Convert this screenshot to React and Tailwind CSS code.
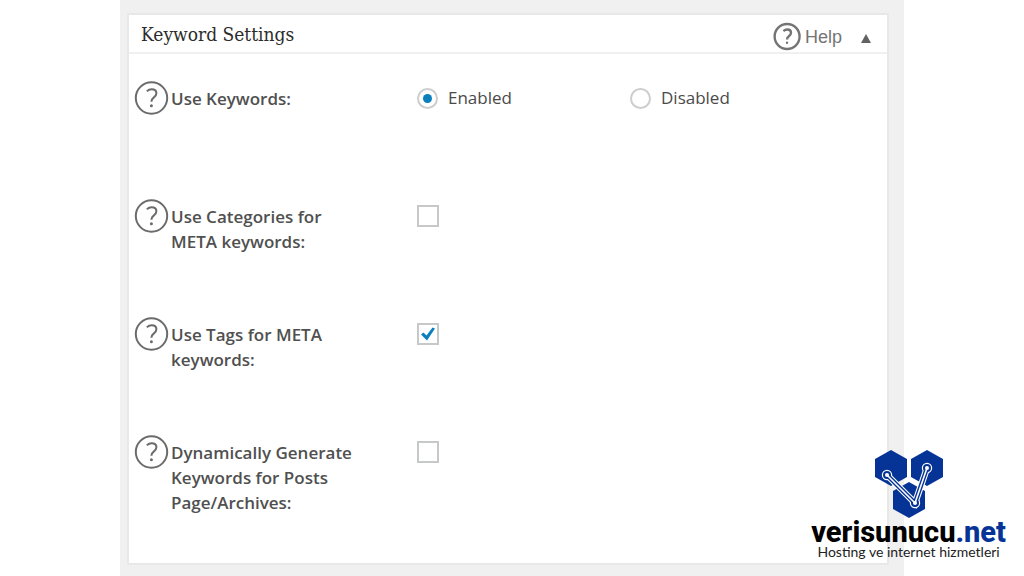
import { useState } from 'react';

const checks = [
  { id: 'categories', label: 'Use Categories for META keywords:' },
  { id: 'tags', label: 'Use Tags for META keywords:' },
  { id: 'dynamic', label: 'Dynamically Generate Keywords for Posts Page/Archives:' },
];

function HelpIcon({ className, stroke = 2 }) {
  return (
    <svg viewBox="0 0 34 34" className={className} fill="none" stroke="currentColor" aria-hidden="true">
      <circle cx="16.5" cy="17" r="15.7" strokeWidth={stroke} />
      <path
        d="M11.8 10.2C13.3 8.9 14.9 8.2 16.6 8.2c3 0 4.8 1.5 4.8 4 0 2.1-1 3.1-2.7 4.4-1.7 1.3-2.3 2.1-2.3 4.2"
        strokeWidth={stroke}
      />
      <circle cx="16.4" cy="24.8" r="1.5" fill="currentColor" stroke="none" />
    </svg>
  );
}

function Row({ label, htmlFor, children }) {
  return (
    <div className="flex h-[118px] items-start">
      <button type="button" aria-label="Help" className="shrink-0 text-[#6b6b6b]">
        <HelpIcon className="h-[34px] w-[34px] overflow-visible" />
      </button>
      <label htmlFor={htmlFor} className="ml-0.5 w-[184px] shrink-0 pt-[5px] text-[17px] leading-[25px] font-semibold text-[#505050]">
        {label}
      </label>
      <div className="ml-[62px] flex h-[34px] flex-1 items-center">{children}</div>
    </div>
  );
}

function Radio({ label, checked, onChange }) {
  return (
    <label className="flex w-[213px] items-center gap-2.5 text-[17px] leading-6 font-medium text-[#4a4a4a]">
      <span className="grid place-items-center">
        <input
          type="radio"
          name="use-keywords"
          checked={checked}
          onChange={onChange}
          className="col-start-1 row-start-1 h-[21px] w-[21px] appearance-none rounded-full border-2 border-[#cbcdce] bg-white"
        />
        {checked && <span className="pointer-events-none z-10 col-start-1 row-start-1 h-[9px] w-[9px] rounded-full bg-[#0a7fbd]" />}
      </span>
      {label}
    </label>
  );
}

function Logo() {
  return (
    <a href="#" className="absolute right-[18px] bottom-[18px] flex flex-col items-center">
      <svg viewBox="0 0 70 70" className="h-[70px] w-[70px]" aria-hidden="true">
        <g fill="#063496">
          <path d="M17 1 33 10v18L17 37 1 28V10z" />
          <path d="M53 1l16 9v18l-16 9-16-9V10z" />
          <path d="M35 33l16 9v18l-16 9-16-9V42z" />
        </g>
        <path d="M13 26 41 54 53 19" fill="none" stroke="#fff" strokeWidth="6.6" />
        <g fill="#063496" stroke="#fff" strokeWidth="1.2">
          <circle cx="13" cy="26" r="4.6" />
          <circle cx="53" cy="19" r="4.6" />
          <circle cx="41" cy="54" r="4.6" />
        </g>
        <path d="M13 26 41 54 53 19" fill="none" stroke="#063496" strokeWidth="4.4" />
        <path d="M13 26 41 54 53 19" fill="none" stroke="#fff" strokeWidth="1.6" />
        <g fill="#fff">
          <circle cx="13" cy="26" r="2" />
          <circle cx="53" cy="19" r="2" />
          <circle cx="41" cy="54" r="2" />
        </g>
      </svg>
      <span className="font-[Roboto,sans-serif] text-[29px] leading-[26px] font-extrabold text-black">
        verisunucu<span className="text-[#063496]">.net</span>
      </span>
      <span className="font-[Lato,sans-serif] text-[14px] leading-[14px] text-[#222]">
        Hosting ve internet hizmetleri
      </span>
    </a>
  );
}

export default function App() {
  const [enabled, setEnabled] = useState(true);
  const [open, setOpen] = useState(true);
  const [values, setValues] = useState({ categories: false, tags: true, dynamic: false });

  return (
    <div className="relative min-h-screen bg-white font-['Open_Sans',sans-serif]">
      <main className="mx-auto min-h-screen w-full max-w-[784px] bg-[#f0f0f0] pt-[13px] pr-[15px] pb-3 pl-[7px]">
        <section className="border-2 border-[#e8e8e8] bg-white">
          <header className="flex h-[39px] items-center justify-between border-b-2 border-[#f0f0f0] pr-[15px] pl-3">
            <h2 className="font-['DejaVu_Serif_Condensed','DejaVu_Serif',serif] text-[19px] leading-6 text-[#2c2c2c]">Keyword Settings</h2>
            <div className="flex items-center pt-1.5 text-[#747474]">
              <button type="button" className="flex items-center gap-1 font-['Liberation_Sans',sans-serif] text-[18px] leading-6">
                <HelpIcon className="h-[27px] w-[27px] overflow-visible" stroke={3} />
                Help
              </button>
              <button type="button" aria-label="Toggle panel" onClick={() => setOpen(!open)} className="ml-[18px] pt-1">
                <svg viewBox="0 0 12 9" className="h-[9px] w-3" fill="#626262">
                  <path d="M6 0 11 9H1z" />
                </svg>
              </button>
            </div>
          </header>

          {open && (
            <div className="pt-[27px] pb-[10px] pl-1.5">
              <Row label="Use Keywords:">
                <Radio label="Enabled" checked={enabled} onChange={() => setEnabled(true)} />
                <Radio label="Disabled" checked={!enabled} onChange={() => setEnabled(false)} />
              </Row>
              {checks.map((c) => (
                <Row key={c.id} label={c.label} htmlFor={c.id}>
                  <span className="grid place-items-center">
                    <input
                      id={c.id}
                      type="checkbox"
                      checked={values[c.id]}
                      onChange={(e) => setValues({ ...values, [c.id]: e.target.checked })}
                      className="col-start-1 row-start-1 h-[22px] w-[22px] appearance-none border-2 border-[#c6c8c9] bg-white"
                    />
                    {values[c.id] && (
                      <svg viewBox="0 0 16 16" className="pointer-events-none z-10 col-start-1 row-start-1 h-4 w-4" fill="#0a7fbd">
                        <path d="M1 8.5 3.5 6.5 6.5 9.5 12.5 1.5 15 2.5 7 14.5z" />
                      </svg>
                    )}
                  </span>
                </Row>
              ))}
            </div>
          )}
        </section>
      </main>
      <Logo />
    </div>
  );
}
